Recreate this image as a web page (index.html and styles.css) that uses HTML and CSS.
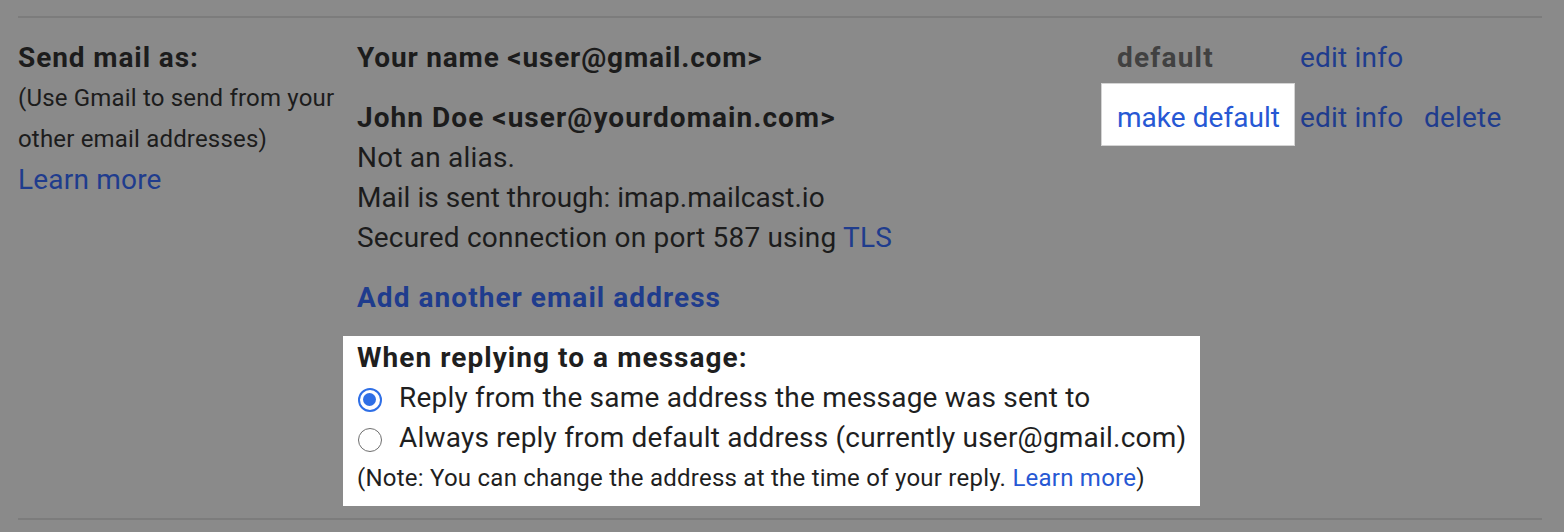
FILE: index.html
```html
<!DOCTYPE html>
<html lang="en">
<head>
<meta charset="utf-8">
<title>Send mail as</title>
<link rel="stylesheet" href="styles.css">
</head>
<body>
<div class="settings">
  <div class="row">
    <div class="label-col">
      <div class="label-title">Send mail as:</div>
      <div class="label-sub">(Use Gmail to send from your other email addresses)</div>
      <a class="link label-link" href="#">Learn more</a>
    </div>
    <div class="content-col">
      <div class="line bold first-name">Your name &lt;user@gmail.com&gt;</div>
      <div class="account">
        <div class="line bold">John Doe &lt;user@yourdomain.com&gt;</div>
        <div class="line">Not an alias.</div>
        <div class="line tight">Mail is sent through: imap.mailcast.io</div>
        <div class="line">Secured connection on port 587 using <a class="link" href="#">TLS</a></div>
      </div>
      <div class="line bold add"><a class="link" href="#">Add another email address</a></div>
      <div class="reply-box">
        <div class="line bold">When replying to a message:</div>
        <label class="line option"><span class="radio checked"></span>Reply from the same address the message was sent to</label>
        <label class="line option"><span class="radio"></span>Always reply from default address (currently user@gmail.com)</label>
        <div class="line note">(Note: You can change the address at the time of your reply. <a class="link-bright" href="#">Learn more</a>)</div>
      </div>
    </div>
    <div class="actions-col">
      <div class="actions">
        <span class="cell cell-first default-label">default</span>
        <a class="cell cell-edit link" href="#">edit info</a>
      </div>
      <div class="actions second">
        <a class="cell cell-first highlight link-bright tight" href="#">make default</a>
        <a class="cell cell-edit link" href="#">edit info</a>
        <a class="cell link" href="#">delete</a>
      </div>
    </div>
  </div>
</div>
</body>
</html>
```
FILE: styles.css
```css
html, body {
  margin: 0;
  padding: 0;
  background: #8a8a8a;
}
body {
  font-family: Roboto, "Noto Sans", sans-serif;
  color: #1c1c1c;
  font-size: 28px;
  line-height: 40px;
  letter-spacing: 0.2px;
}
a { text-decoration: none; }
.link { color: #1f3c8d; }
.link-bright { color: #2758d4; }

.settings {
  margin: 16px 0 0 18px;
  width: 1524px;
  border-top: 2px solid #7c7c7c;
  border-bottom: 2px solid #7c7c7c;
}
.row {
  display: flex;
  padding: 20px 0 12px 0;
}
.label-col {
  width: 339px;
  flex: none;
  display: flex;
  flex-direction: column;
  align-items: flex-start;
}
.label-title {
  font-weight: 700;
  letter-spacing: 0.9px;
}
.label-sub {
  font-size: 24px;
  line-height: 41px;
  width: 330px;
  letter-spacing: 0.18px;
}
.label-link { font-size: 28px; }

.content-col {
  width: 745px;
  flex: none;
  display: flex;
  flex-direction: column;
  align-items: flex-start;
}
.line { height: 40px; white-space: nowrap; }
.tight { letter-spacing: 0.04px; }
.bold {
  font-weight: 700;
  letter-spacing: 1.05px;
}
.bold.first-name { letter-spacing: 0.82px; }
.account { margin-top: 20px; }
.add { margin-top: 20px; }
.reply-box {
  margin-top: 18px;
  margin-left: -14px;
  padding: 2px 14px 8px 14px;
  background: #ffffff;
  color: #1f1f1f;
}
.option {
  display: flex;
  align-items: center;
}
.radio {
  box-sizing: border-box;
  width: 24px;
  height: 24px;
  margin: 0 17px 0 1px;
  border: 1.7px solid #6e6e6e;
  border-radius: 50%;
  flex: none;
  position: relative;
  top: 2px;
}
.radio.checked {
  border: 2.6px solid #2f6fe6;
}
.radio.checked::after {
  content: "";
  position: absolute;
  left: 2.7px;
  top: 2.7px;
  width: 13.4px;
  height: 13.4px;
  border-radius: 50%;
  background: #2f6fe6;
}
.note {
  font-size: 24px;
  letter-spacing: 0.24px;
}

.actions-col {
  display: flex;
  flex-direction: column;
}
.actions {
  display: flex;
  height: 40px;
  align-items: flex-start;
}
.actions.second { margin-top: 20px; }
.cell { display: block; white-space: nowrap; }
.cell-first {
  box-sizing: border-box;
  width: 192px;
  padding-left: 15px;
}
.cell-edit {
  width: 124px;
  margin-left: 6px;
}
.default-label {
  color: #414141;
  font-weight: 700;
  letter-spacing: 1.2px;
}
.highlight {
  background: #ffffff;
  margin: -14px 0 -7px 0;
  padding-top: 14px;
  padding-bottom: 7px;
  box-shadow: 0 0 0 1px #d4d4d4;
}
```
